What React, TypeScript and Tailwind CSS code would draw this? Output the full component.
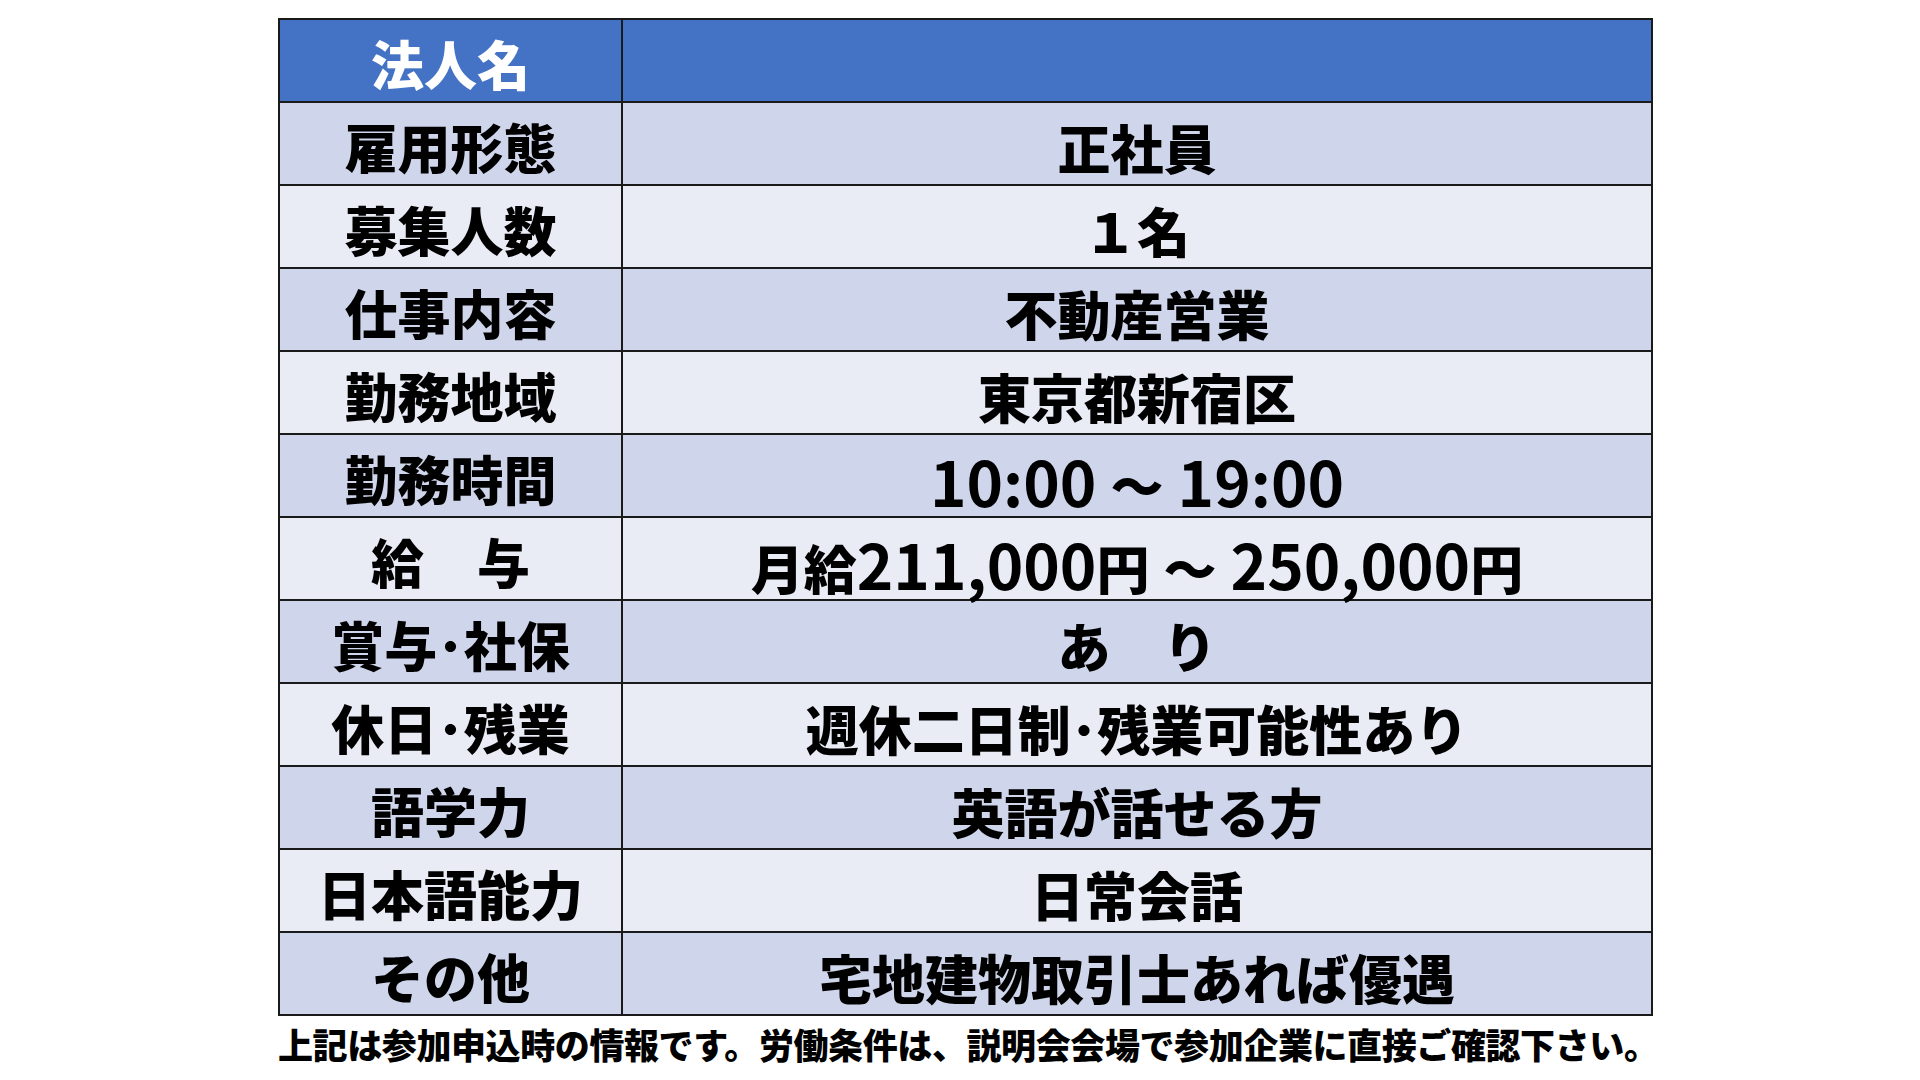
import React from "react";

const Num = ({ children }: { children: React.ReactNode }) => (
  <span className="text-[62px] font-bold">{children}</span>
);

const rows: [string, React.ReactNode][] = [
  ["雇用形態", "正社員"],
  ["募集人数", "１名"],
  ["仕事内容", "不動産営業"],
  ["勤務地域", "東京都新宿区"],
  [
    "勤務時間",
    <>
      <Num>10:00 </Num>～<Num> 19:00</Num>
    </>,
  ],
  [
    "給　与",
    <>
      月給<Num>211,000</Num>円<Num> </Num>～<Num> 250,000</Num>円
    </>,
  ],
  ["賞与･社保", "あ　り"],
  ["休日･残業", "週休二日制･残業可能性あり"],
  ["語学力", "英語が話せる方"],
  ["日本語能力", "日常会話"],
  ["その他", "宅地建物取引士あれば優遇"],
];

export default function App() {
  return (
    <div
      className="w-[1920px] h-[1080px] bg-white overflow-hidden"
      style={{ fontFamily: '"Noto Sans CJK JP", "Noto Sans", sans-serif' }}
    >
      <div className="ml-[278px] pt-[18px] w-[1376px]">
        <table className="border-collapse w-[1373px] table-fixed border-2 border-[#1a1a1a]">
          <colgroup>
            <col className="w-[343px]" />
            <col className="w-[1030px]" />
          </colgroup>
          <tbody>
            <tr className="h-[83px] bg-[#4472c4]">
              <td className="border-2 border-[#1a1a1a] text-center align-middle p-0 pt-[6px] text-white text-[53px] font-black leading-none">
                法人名
              </td>
              <td className="border-2 border-[#1a1a1a] p-0"></td>
            </tr>
            {rows.map(([k, v], i) => (
              <tr
                key={k}
                className={
                  i % 2 === 0 ? "h-[83px] bg-[#cfd5ea]" : "h-[83px] bg-[#e9ebf5]"
                }
              >
                <td className="border-2 border-[#1a1a1a] text-center align-middle p-0 pt-[6px] text-black text-[53px] font-black leading-none whitespace-nowrap">
                  {k}
                </td>
                <td className="border-2 border-[#1a1a1a] text-center align-middle p-0 pt-[8px] text-black text-[53px] font-black leading-none whitespace-nowrap">
                  {v}
                </td>
              </tr>
            ))}
          </tbody>
        </table>
        <div className="mt-[10px] text-[35px] font-black leading-none tracking-[-0.4px] text-black whitespace-nowrap">
          上記は参加申込時の情報です。労働条件は、説明会会場で参加企業に直接ご確認下さい。
        </div>
      </div>
    </div>
  );
}
